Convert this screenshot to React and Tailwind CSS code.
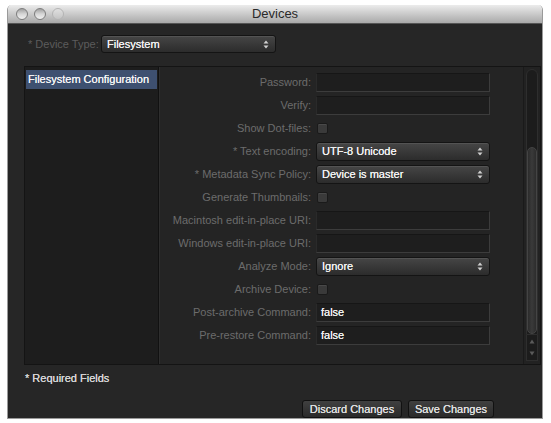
const FONT = { fontFamily: '"Liberation Sans", Arial, sans-serif' };

const ROWS = [
  { label: 'Password:', kind: 'input' },
  { label: 'Verify:', kind: 'input' },
  { label: 'Show Dot-files:', kind: 'check' },
  { label: '* Text encoding:', kind: 'select', value: 'UTF-8 Unicode' },
  { label: '* Metadata Sync Policy:', kind: 'select', value: 'Device is master' },
  { label: 'Generate Thumbnails:', kind: 'check' },
  { label: 'Macintosh edit-in-place URI:', kind: 'input' },
  { label: 'Windows edit-in-place URI:', kind: 'input' },
  { label: 'Analyze Mode:', kind: 'select', value: 'Ignore' },
  { label: 'Archive Device:', kind: 'check' },
  { label: 'Post-archive Command:', kind: 'input', value: 'false' },
  { label: 'Pre-restore Command:', kind: 'input', value: 'false' },
];

function Arrows() {
  return (
    <svg width="6" height="9" viewBox="0 0 6 9" className="shrink-0">
      <path d="M3 0.5L5.5 3.5H0.5z" fill="#d0d0d0" />
      <path d="M3 8.5L5.5 5.5H0.5z" fill="#d0d0d0" />
    </svg>
  );
}

function Select({ value, className = '' }) {
  return (
    <div
      className={`flex items-center justify-between pl-[5px] pr-[6px] rounded-[3px] border border-[#141414] bg-gradient-to-b from-[#464646] to-[#2c2c2c] shadow-[inset_0_1px_0_rgba(255,255,255,0.08)] ${className}`}
    >
      <span className="text-[11px] text-[#f0f0f0] leading-none [text-shadow:0_0_0.4px_#fff]">{value}</span>
      <Arrows />
    </div>
  );
}

function Control({ row }) {
  if (row.kind === 'check') {
    return <div className="w-[11px] h-[11px] ml-[1px] rounded-[2px] bg-[#3a3a3a] border border-[#1a1a1a] shadow-[inset_0_1px_0_rgba(255,255,255,0.08)]" />;
  }
  if (row.kind === 'select') {
    return <Select value={row.value} className="w-[174px] h-[19px]" />;
  }
  return (
    <div className="w-[174px] h-[19px] flex items-center pl-[4px] bg-[#1e1e1e] border border-[#3c3c3c] border-t-[#161616] border-l-[#2a2a2a]">
      {row.value && <span className="text-[11px] text-[#f0f0f0] leading-none [text-shadow:0_0_0.4px_#fff]">{row.value}</span>}
    </div>
  );
}

function Scrollbar() {
  return (
    <div className="w-[17px] h-full bg-[#222] border-l border-[#1a1a1a] flex flex-col items-center pt-[2px] pb-[3px]">
      <div className="w-[12px] flex-1 rounded-t-[6px] bg-[#1c1c1c] border border-[#2e2e2e] flex flex-col justify-end">
        <div className="h-[187px] rounded-[6px] bg-gradient-to-r from-[#2c2c2c] via-[#3a3a3a] to-[#2c2c2c] border border-[#444]" />
      </div>
      <div className="w-[12px] h-[26px] flex flex-col items-center justify-around bg-[#1c1c1c] border border-[#2e2e2e] border-t-0">
        <svg width="6" height="5" viewBox="0 0 6 5"><path d="M3 0.5L5.5 4.5H0.5z" fill="#5a5a5a" /></svg>
        <svg width="6" height="5" viewBox="0 0 6 5"><path d="M3 4.5L5.5 0.5H0.5z" fill="#5a5a5a" /></svg>
      </div>
    </div>
  );
}

function TrafficLight({ faint }) {
  return (
    <div
      className={`w-[12px] h-[12px] rounded-full border ${
        faint
          ? 'border-[#b4b4b4] bg-gradient-to-b from-[#e0e0e0] to-[#c4c4c4]'
          : 'border-[#7c7c7c] bg-gradient-to-b from-[#a0a0a0] via-[#d6d6d6] to-[#f0f0f0]'
      }`}
    />
  );
}

export default function App() {
  return (
    <div className="w-[551px] h-[423px] bg-white pt-[5px] pl-[7px]" style={FONT}>
      <div className="w-[536px] h-[414px] flex flex-col rounded-t-[5px] overflow-hidden border-x border-b border-[#9a9a9a]">
        <div className="h-[19px] shrink-0 relative flex items-center bg-gradient-to-b from-[#ececec] to-[#a9a9a9] border-b border-[#555]">
          <div className="flex items-center gap-[6px] pl-[8px]">
            <TrafficLight />
            <TrafficLight />
            <TrafficLight faint />
          </div>
          <div className="absolute inset-0 flex items-center justify-center text-[13px] text-[#2a2a2a]">Devices</div>
        </div>

        <div className="flex-1 bg-[#262626] flex flex-col">
          <div className="flex items-center pt-[11px] pl-[20px]">
            <span className="text-[11px] text-[#5c5c5c] w-[73px]">* Device Type:</span>
            <Select value="Filesystem" className="w-[175px] h-[18px]" />
          </div>

          <div className="mt-[13px] ml-[16px] w-[517px] h-[299px] flex border border-[#141414] bg-[#242424]">
            <div className="w-[134px] h-full bg-[#1d1d1d] border-r border-[#111] pt-[3px] px-[1px]">
              <div className="h-[19px] flex items-center pl-[2px] bg-[#3e5070] text-[11px] text-[#f4f4f4] whitespace-nowrap [text-shadow:0_0_0.4px_#fff]">
                Filesystem Configuration
              </div>
            </div>
            <div className="flex-1 pt-[4px] border-l border-[#2e2e2e]">
              {ROWS.map((row) => (
                <div key={row.label} className="h-[23px] flex items-center">
                  <span className="w-[151px] text-right text-[11px] text-[#6c6c6c] whitespace-nowrap">{row.label}</span>
                  <div className="ml-[5px]">
                    <Control row={row} />
                  </div>
                </div>
              ))}
            </div>
            <Scrollbar />
          </div>

          <div className="pl-[17px] mt-[5px] text-[11px] text-[#d0d0d0] [text-shadow:0_0_0.4px_#fff]">* Required Fields</div>

          <div className="flex justify-end gap-[6px] pr-[48px] mt-[13px]">
            <button className="w-[100px] h-[18px] rounded-[3px] border border-[#111] bg-gradient-to-b from-[#404040] to-[#2a2a2a] text-[11px] text-[#dcdcdc] [text-shadow:0_0_0.4px_#fff]">
              Discard Changes
            </button>
            <button className="w-[86px] h-[18px] rounded-[3px] border border-[#111] bg-gradient-to-b from-[#404040] to-[#2a2a2a] text-[11px] text-[#dcdcdc] [text-shadow:0_0_0.4px_#fff]">
              Save Changes
            </button>
          </div>
        </div>
      </div>
    </div>
  );
}
